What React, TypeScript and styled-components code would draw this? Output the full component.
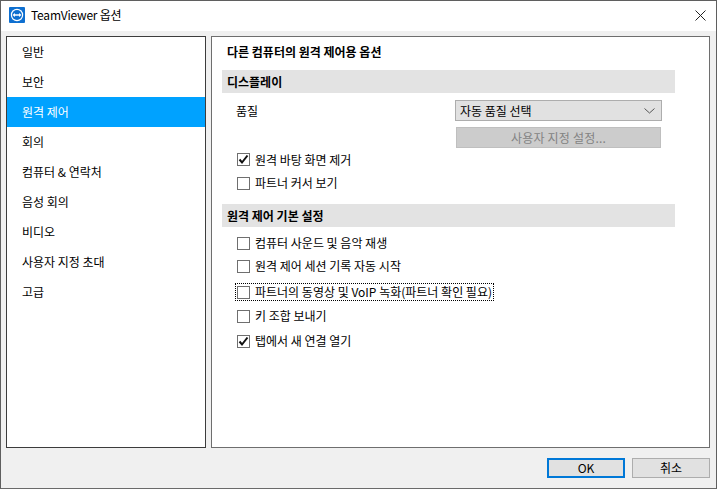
import * as React from "react";
import styled, { createGlobalStyle } from "styled-components";

const GlobalStyle = createGlobalStyle`
  html, body {
    margin: 0;
    padding: 0;
    background: #f0f0f0;
  }
  body {
    font-family: "Noto Sans CJK KR", "Liberation Sans", sans-serif;
    font-size: 12px;
    color: #000;
  }
`;

const Window = styled.div`
  box-sizing: border-box;
  width: 717px;
  height: 489px;
  display: flex;
  flex-direction: column;
  background: #f0f0f0;
  border: 1px solid #5f5f5f;
  border-bottom-color: #6a6a6a;
`;

const TitleBar = styled.div`
  height: 30px;
  flex: none;
  display: flex;
  align-items: center;
  padding: 0 0 2px 8px;
  box-sizing: border-box;
  background: #fff;
`;

const TitleText = styled.span`
  margin-left: 6px;
  font-size: 12px;
  line-height: 16px;
  letter-spacing: -0.2px;
`;

const CloseButton = styled.svg`
  margin-left: auto;
  margin-right: 10px;
`;

const Body = styled.div`
  flex: none;
  display: flex;
  gap: 5px;
  padding: 5px 6px 0 5px;
`;

const SideList = styled.ul`
  box-sizing: border-box;
  width: 200px;
  height: 412px;
  margin: 0;
  padding: 0;
  list-style: none;
  background: #fff;
  border: 1px solid #3c3c3c;
`;

const SideItem = styled.li<{ $selected?: boolean }>`
  height: 30px;
  display: flex;
  align-items: center;
  padding-left: 15px;
  padding-bottom: 1px;
  box-sizing: border-box;
  line-height: 16px;
  color: ${(p) => (p.$selected ? "#fff" : "#000")};
  background: ${(p) => (p.$selected ? "#00a2ff" : "transparent")};
`;

const Panel = styled.div`
  box-sizing: border-box;
  flex: 1;
  height: 412px;
  padding: 7px 34px 0 10px;
  background: #fff;
  border: 1px solid #6e6e6e;
`;

const Heading = styled.div`
  height: 16px;
  padding-left: 5px;
  margin-bottom: 10px;
  font-weight: 700;
  line-height: 16px;
`;

const SectionBar = styled.div<{ $gap?: number }>`
  height: 23px;
  display: flex;
  align-items: center;
  margin-top: ${(p) => p.$gap ?? 0}px;
  padding-left: 5px;
  background: #e3e3e3;
  font-weight: 700;
`;

const QualityRow = styled.div`
  display: flex;
  justify-content: space-between;
  padding: 7px 13px 0 14px;
`;

const QualityLabel = styled.span`
  line-height: 21px;
`;

const QualityControls = styled.div`
  width: 207px;
  display: flex;
  flex-direction: column;
  align-items: center;
  gap: 6px;
`;

const Select = styled.div`
  box-sizing: border-box;
  width: 207px;
  height: 21px;
  display: flex;
  align-items: center;
  justify-content: space-between;
  padding: 0 6px 0 4px;
  background: #e1e1e1;
  border: 1px solid #adadad;
`;

const DisabledButton = styled.div`
  box-sizing: border-box;
  width: 205px;
  height: 21px;
  display: flex;
  align-items: center;
  justify-content: center;
  background: #cccccc;
  border: 1px solid #bfbfbf;
  color: #838383;
  letter-spacing: 0.2px;
`;

const CheckList = styled.div<{ $top: number }>`
  display: flex;
  flex-direction: column;
  padding: ${(p) => p.$top}px 0 0 15px;
`;

const CheckRow = styled.div<{ $height: number }>`
  height: ${(p) => p.$height}px;
  display: flex;
  align-items: center;
`;

const Box = styled.span`
  box-sizing: border-box;
  width: 13px;
  height: 13px;
  flex: none;
  display: flex;
  align-items: center;
  justify-content: center;
  background: #fff;
  border: 1px solid #6f6f6f;
`;

const CheckLabel = styled.span`
  margin-left: 5px;
  line-height: 16px;
`;

const FocusRing = styled.span`
  display: flex;
  align-items: center;
  height: 18px;
  margin-left: -2px;
  padding: 0 2px;
  outline: 1px dotted #000;
  outline-offset: -1px;
`;

const Footer = styled.div`
  flex: 1;
  display: flex;
  justify-content: flex-end;
  align-items: flex-start;
  gap: 7px;
  padding: 10px 6px 0 0;
`;

const FooterButton = styled.button<{ $primary?: boolean }>`
  box-sizing: border-box;
  width: 78px;
  height: 20px;
  padding: 0;
  font: inherit;
  line-height: 16px;
  color: #000;
  background: #e1e1e1;
  border: ${(p) => (p.$primary ? "2px solid #0078d7" : "1px solid #adadad")};
  border-radius: 0;
`;

const Check = () => (
  <svg width="11" height="11" viewBox="0 0 11 11">
    <path d="M1.5 5.5 L4 8.5 L9.5 1.5" fill="none" stroke="#111" strokeWidth="2" />
  </svg>
);

const Logo = () => (
  <svg width="16" height="16" viewBox="0 0 16 16">
    <rect width="16" height="16" rx="1" fill="#0e6fd0" />
    <circle cx="8" cy="8" r="6.2" fill="#fff" />
    <circle cx="8" cy="8" r="5" fill="#0e6fd0" />
    <path d="M3.5 8 L6 6 V7.2 H10 V6 L12.5 8 L10 10 V8.8 H6 V10 Z" fill="#fff" />
  </svg>
);

const MENU = [
  "일반",
  "보안",
  "원격 제어",
  "회의",
  "컴퓨터 & 연락처",
  "음성 회의",
  "비디오",
  "사용자 지정 초대",
  "고급",
];

const App: React.FC = () => {
  return (
    <>
      <GlobalStyle />
      <Window>
        <TitleBar>
          <Logo />
          <TitleText>TeamViewer 옵션</TitleText>
          <CloseButton width="11" height="11" viewBox="0 0 11 11">
            <path d="M0.5 0.5 L10.5 10.5 M10.5 0.5 L0.5 10.5" stroke="#222" strokeWidth="1" />
          </CloseButton>
        </TitleBar>
        <Body>
          <SideList>
            {MENU.map((item) => (
              <SideItem key={item} $selected={item === "원격 제어"}>
                {item}
              </SideItem>
            ))}
          </SideList>
          <Panel>
            <Heading>다른 컴퓨터의 원격 제어용 옵션</Heading>
            <SectionBar>디스플레이</SectionBar>
            <QualityRow>
              <QualityLabel>품질</QualityLabel>
              <QualityControls>
                <Select>
                  <span>자동 품질 선택</span>
                  <svg width="11" height="6" viewBox="0 0 11 6">
                    <path d="M0.5 0.5 L5.5 5 L10.5 0.5" fill="none" stroke="#555" strokeWidth="1" />
                  </svg>
                </Select>
                <DisabledButton>사용자 지정 설정...</DisabledButton>
              </QualityControls>
            </QualityRow>
            <CheckList $top={0}>
              <CheckRow $height={23}>
                <Box>
                  <Check />
                </Box>
                <CheckLabel>원격 바탕 화면 제거</CheckLabel>
              </CheckRow>
              <CheckRow $height={24}>
                <Box />
                <CheckLabel>파트너 커서 보기</CheckLabel>
              </CheckRow>
            </CheckList>
            <SectionBar $gap={9}>원격 제어 기본 설정</SectionBar>
            <CheckList $top={5}>
              <CheckRow $height={22}>
                <Box />
                <CheckLabel>컴퓨터 사운드 및 음악 재생</CheckLabel>
              </CheckRow>
              <CheckRow $height={24}>
                <Box />
                <CheckLabel>원격 제어 세션 기록 자동 시작</CheckLabel>
              </CheckRow>
              <CheckRow $height={28}>
                <FocusRing>
                  <Box />
                  <CheckLabel>파트너의 동영상 및 VoIP 녹화(파트너 확인 필요)</CheckLabel>
                </FocusRing>
              </CheckRow>
              <CheckRow $height={20}>
                <Box />
                <CheckLabel>키 조합 보내기</CheckLabel>
              </CheckRow>
              <CheckRow $height={30}>
                <Box>
                  <Check />
                </Box>
                <CheckLabel>탭에서 새 연결 열기</CheckLabel>
              </CheckRow>
            </CheckList>
          </Panel>
        </Body>
        <Footer>
          <FooterButton $primary>OK</FooterButton>
          <FooterButton>취소</FooterButton>
        </Footer>
      </Window>
    </>
  );
};

export default App;
